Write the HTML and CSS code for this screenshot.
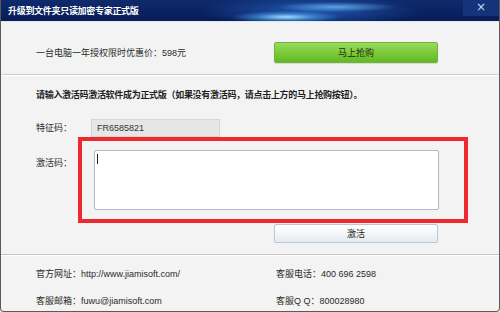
FILE: index.html
```html
<!DOCTYPE html>
<html lang="zh-CN">
<head>
<meta charset="utf-8">
<title>升级到文件夹只读加密专家正式版</title>
<link rel="stylesheet" href="styles.css">
</head>
<body>
<div class="window">
  <div class="titlebar">
    <span class="title">升级到文件夹只读加密专家正式版</span>
    <span class="close">×</span>
  </div>
  <div class="top">
    <span class="price">一台电脑一年授权限时优惠价：598元</span>
    <button class="btn-buy">马上抢购</button>
  </div>
  <div class="main">
    <p class="hint">请输入激活码激活软件成为正式版（如果没有激活码，请点击上方的马上抢购按钮）。</p>
    <div class="row row-id">
      <span class="label label-id">特征码：</span>
      <div class="field">FR6585821</div>
    </div>
    <div class="row row-code">
      <span class="label label-code">激活码：</span>
      <div class="highlight">
        <div class="textarea"><span class="caret"></span></div>
      </div>
    </div>
    <div class="row row-btn">
      <button class="btn-activate">激活</button>
    </div>
  </div>
  <div class="footer">
    <div class="col">
      <span>官方网址：http://www.jiamisoft.com/</span>
      <span>客服邮箱：fuwu@jiamisoft.com</span>
    </div>
    <div class="col">
      <span>客服电话：400 696 2598</span>
      <span>客服Q Q：800028980</span>
    </div>
  </div>
</div>
</body>
</html>
```

FILE: styles.css
```css
* { box-sizing: border-box; }
html, body { margin: 0; padding: 0; background: #ffffff; }
body {
  width: 500px;
  height: 312px;
  overflow: hidden;
  font-family: "Liberation Sans", "Noto Sans CJK SC", sans-serif;
  font-size: 9px;
  color: #2a2a2a;
}
.window {
  width: 500px;
  height: 312px;
  display: flex;
  flex-direction: column;
  background: #f3f3f3;
  border-left: 1px solid #5a5a5a;
  border-right: 1px solid #5a5a5a;
  border-bottom: 1px solid #5a5a5a;
  border-radius: 0 0 4px 4px;
  overflow: hidden;
}
.titlebar {
  height: 22px;
  flex: none;
  display: flex;
  align-items: flex-start;
  background:
    radial-gradient(ellipse 55px 6px at 285px 17px, rgba(170, 230, 255, 0.95), rgba(80, 170, 240, 0.5) 55%, rgba(20, 60, 150, 0) 100%),
    radial-gradient(ellipse 60px 5px at 335px 7px, rgba(120, 200, 255, 0.7), rgba(20, 60, 150, 0) 100%),
    radial-gradient(ellipse 110px 16px at 310px 11px, rgba(40, 110, 210, 0.7), rgba(20, 60, 150, 0) 100%),
    linear-gradient(180deg, #102a6c 0%, #0a2262 55%, #081d58 100%);
  border-bottom: 1px solid #dfe6ef;
}
.title {
  color: #ffffff;
  font-weight: bold;
  line-height: 22px;
  padding-left: 7px;
  letter-spacing: -0.3px;
}
.close {
  margin-left: auto;
  width: 36px;
  height: 16px;
  line-height: 15px;
  text-align: center;
  color: #c2dcf5;
  font-family: "DejaVu Sans", sans-serif;
  font-size: 12px;
  background: #15337a;
}
.top {
  height: 52px;
  flex: none;
  display: flex;
  align-items: center;
  padding: 8px 0 0 35px;
}
.price { width: 238px; }
.btn-buy {
  width: 164px;
  height: 21px;
  padding: 0;
  font: inherit;
  color: #1d2a10;
  border: 1px solid #72b23e;
  border-radius: 2px;
  background: linear-gradient(180deg, #9ad95e 0%, #7ccb3c 50%, #62b923 100%);
  box-shadow: 0 1px 1px rgba(0, 0, 0, 0.12);
}
.main {
  flex: none;
  height: 180px;
  border-top: 1px solid #cdcdcd;
  box-shadow: inset 0 1px 0 #ffffff;
  padding: 0 0 0 35px;
}
.hint {
  margin: 13px 0 0 0;
  line-height: 14px;
  font-weight: bold;
  color: #1e1e1e;
  letter-spacing: -0.3px;
}
.row { display: flex; align-items: flex-start; }
.label { line-height: 14px; }
.row-id { margin-top: 17px; align-items: center; }
.label-id { width: 55px; }
.field {
  width: 129px;
  height: 18px;
  line-height: 16px;
  padding-left: 5px;
  background: #e6e6e6;
  border: 1px solid #d6d6d6;
  color: #333333;
}
.row-code { margin-top: 0; }
.label-code { width: 42px; margin-top: 19px; }
.highlight {
  width: 390px;
  height: 86px;
  border: 4px solid #ee2a2e;
  padding: 9px 0 0 12px;
}
.textarea {
  width: 345px;
  height: 60px;
  background: #ffffff;
  border: 1px solid #a9bccd;
  border-radius: 2px;
  padding: 3px 0 0 2px;
}
.caret {
  display: block;
  width: 1px;
  height: 10px;
  background: #222222;
}
.row-btn { margin-top: 1px; padding-left: 238px; }
.btn-activate {
  width: 164px;
  height: 19px;
  padding: 0;
  font: inherit;
  color: #222222;
  border: 1px solid #b9c6d3;
  border-radius: 2px;
  background: linear-gradient(180deg, #ffffff 0%, #f4f6f8 50%, #e4eaf0 100%);
}
.footer {
  flex: 1;
  border-top: 1px solid #c6c6c6;
  box-shadow: inset 0 1px 0 #ffffff;
  display: flex;
  padding: 12px 0 0 35px;
}
.col {
  display: flex;
  flex-direction: column;
  gap: 13px;
  line-height: 14px;
}
.col:first-child { width: 240px; }
```
